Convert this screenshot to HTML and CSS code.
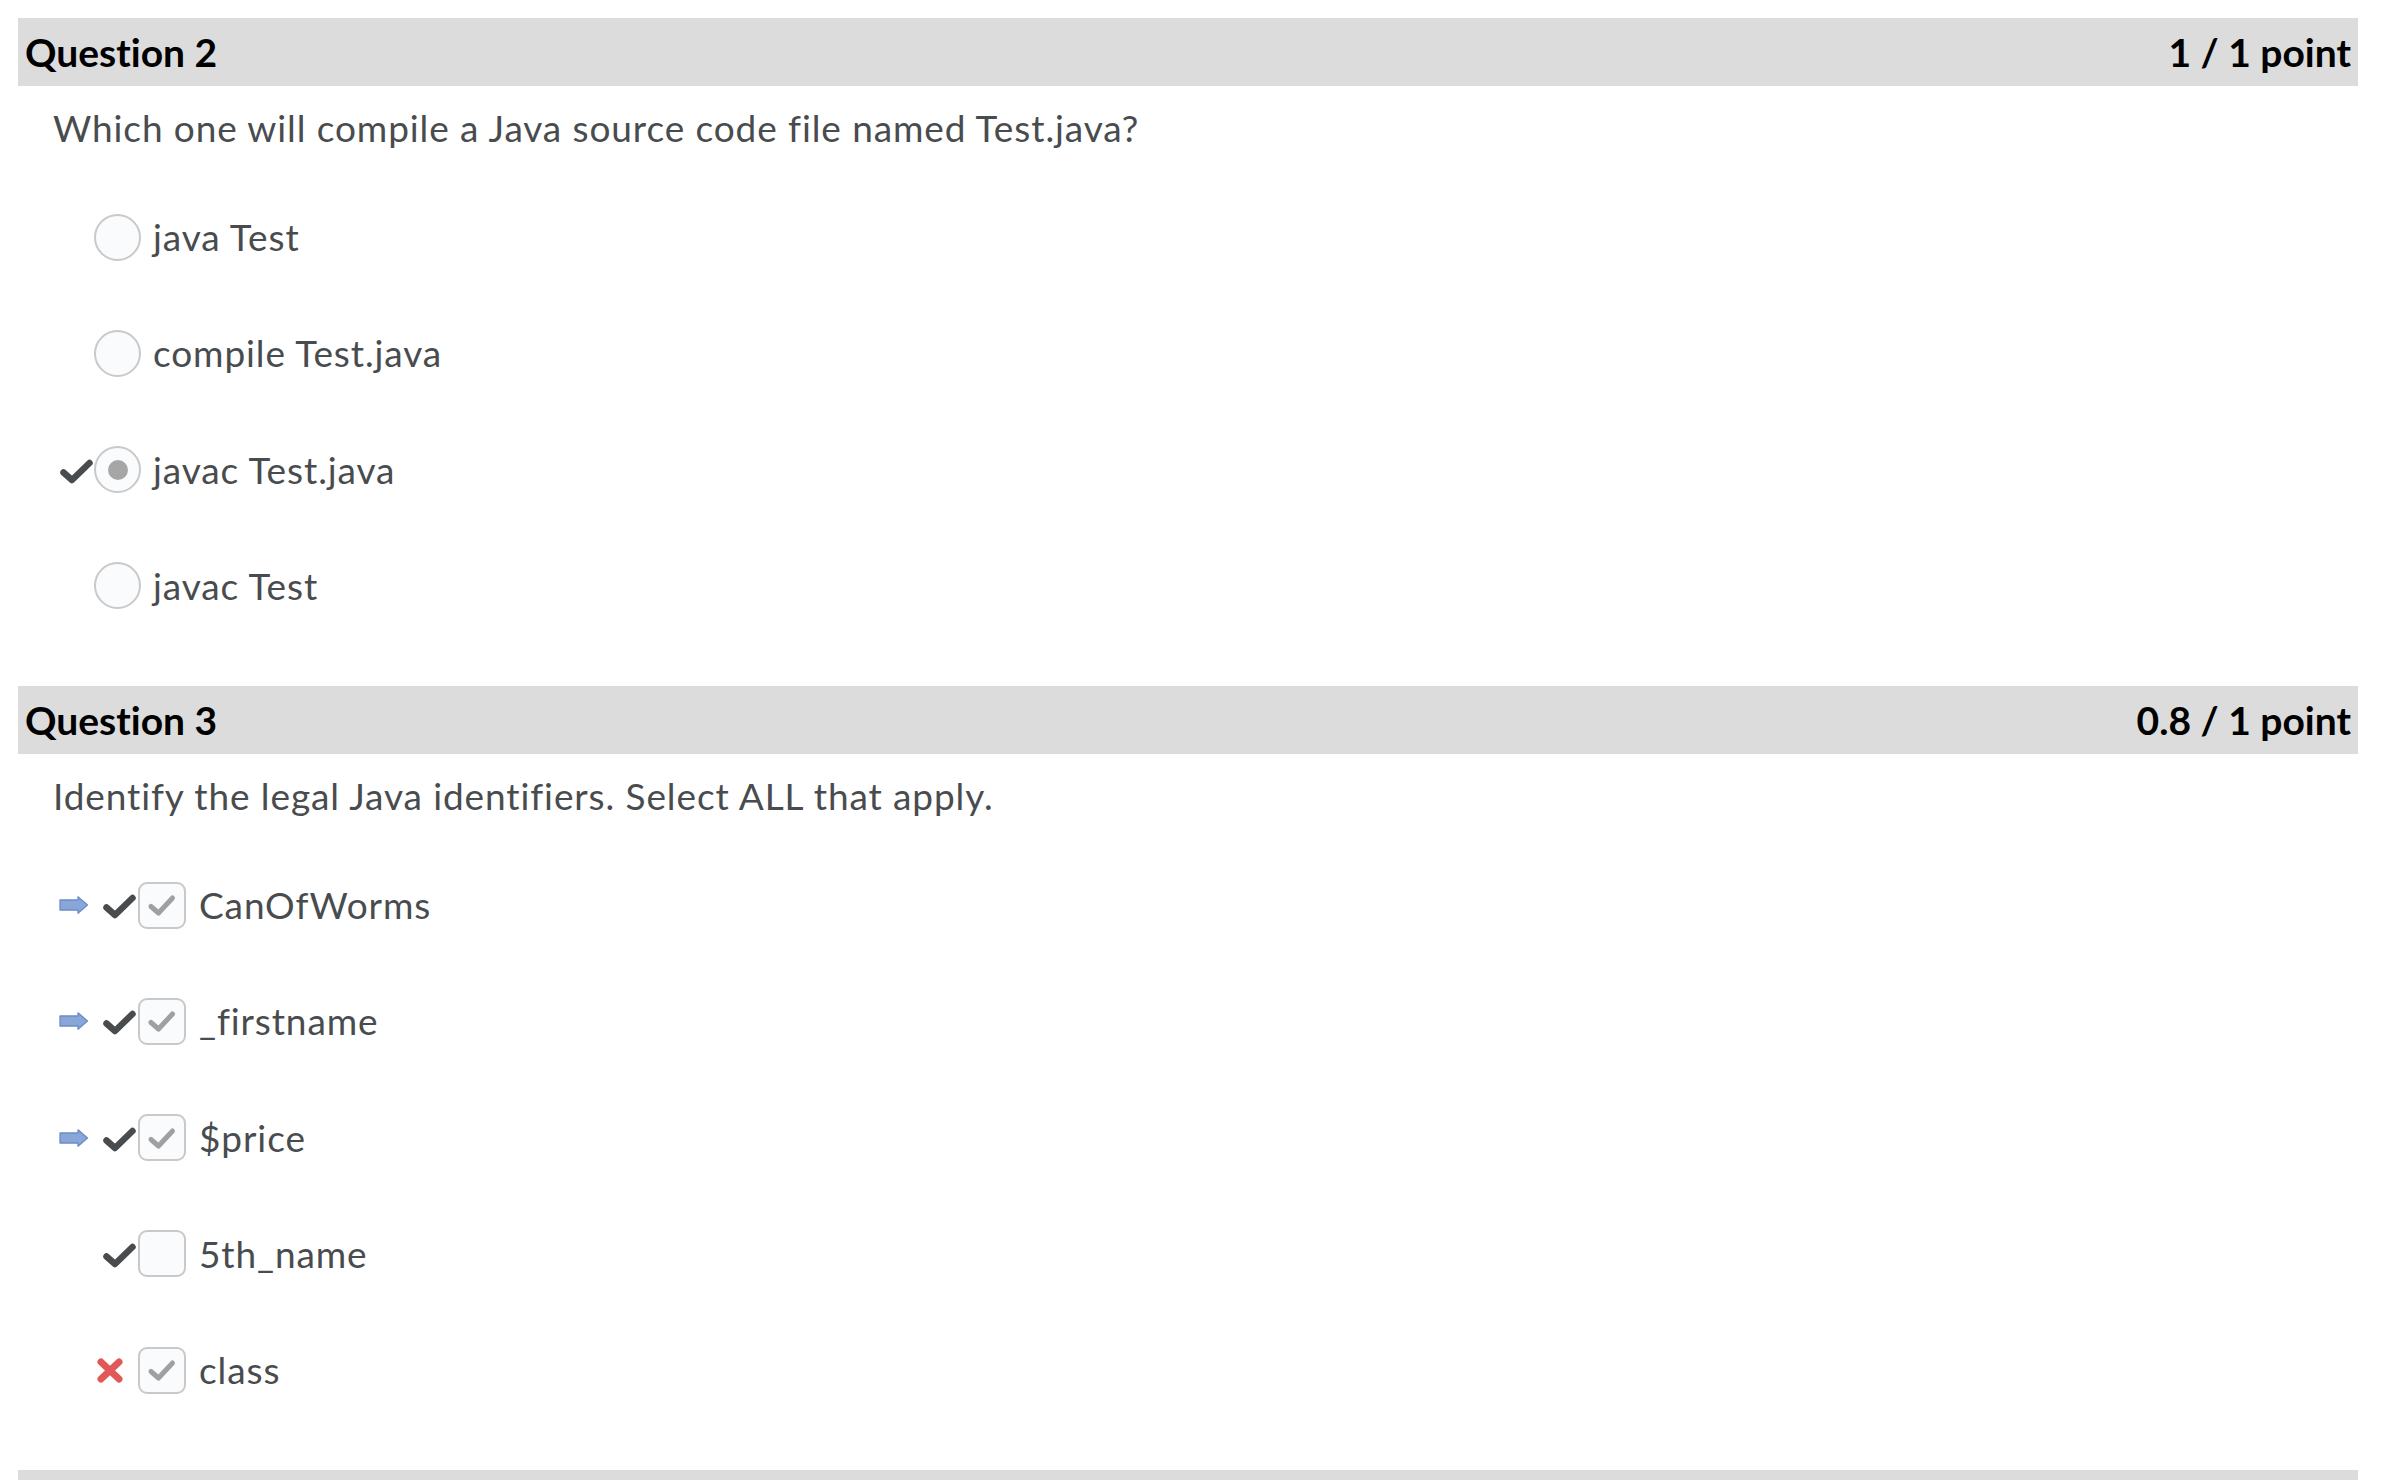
FILE: index.html
```html
<!DOCTYPE html>
<html lang="en">
<head>
<meta charset="utf-8">
<title>Quiz results</title>
<link rel="stylesheet" href="styles.css">
</head>
<body>
<div class="page">
  <section class="question">
    <div class="q-head"><span class="q-title">Question 2</span><span class="q-score">1 / 1 point</span></div>
    <p class="q-text">Which one will compile a Java source code file named Test.java?</p>
    <ul class="options options--radio">
      <li class="option"><span class="mark"></span><span class="radio"></span><span class="label">java Test</span></li>
      <li class="option"><span class="mark"></span><span class="radio"></span><span class="label">compile Test.java</span></li>
      <li class="option"><span class="mark"><svg class="ico-check" viewBox="0 0 33 25" width="33" height="25"><path d="M3.5 13.5 L12 21 L29.5 4" /></svg></span><span class="radio radio--on"></span><span class="label">javac Test.java</span></li>
      <li class="option"><span class="mark"></span><span class="radio"></span><span class="label">javac Test</span></li>
    </ul>
  </section>

  <section class="question">
    <div class="q-head"><span class="q-title">Question 3</span><span class="q-score">0.8 / 1 point</span></div>
    <p class="q-text">Identify the legal Java identifiers. Select ALL that apply.</p>
    <ul class="options options--check">
      <li class="option">
        <span class="hint"><svg class="ico-arrow" viewBox="0 0 30 18" width="30" height="18"><path d="M1 4 H19 V0.8 L28.5 9 L19 17.2 V14 H1 Z" /></svg></span>
        <span class="mark"><svg class="ico-check" viewBox="0 0 33 25" width="33" height="25"><path d="M3.5 13.5 L12 21 L29.5 4" /></svg></span>
        <span class="box"><svg class="ico-tick" viewBox="0 0 30 26" width="30" height="26"><path d="M4 14.5 L11.5 21 L25.5 6" /></svg></span>
        <span class="label">CanOfWorms</span>
      </li>
      <li class="option">
        <span class="hint"><svg class="ico-arrow" viewBox="0 0 30 18" width="30" height="18"><path d="M1 4 H19 V0.8 L28.5 9 L19 17.2 V14 H1 Z" /></svg></span>
        <span class="mark"><svg class="ico-check" viewBox="0 0 33 25" width="33" height="25"><path d="M3.5 13.5 L12 21 L29.5 4" /></svg></span>
        <span class="box"><svg class="ico-tick" viewBox="0 0 30 26" width="30" height="26"><path d="M4 14.5 L11.5 21 L25.5 6" /></svg></span>
        <span class="label">_firstname</span>
      </li>
      <li class="option">
        <span class="hint"><svg class="ico-arrow" viewBox="0 0 30 18" width="30" height="18"><path d="M1 4 H19 V0.8 L28.5 9 L19 17.2 V14 H1 Z" /></svg></span>
        <span class="mark"><svg class="ico-check" viewBox="0 0 33 25" width="33" height="25"><path d="M3.5 13.5 L12 21 L29.5 4" /></svg></span>
        <span class="box"><svg class="ico-tick" viewBox="0 0 30 26" width="30" height="26"><path d="M4 14.5 L11.5 21 L25.5 6" /></svg></span>
        <span class="label">$price</span>
      </li>
      <li class="option">
        <span class="hint"></span>
        <span class="mark"><svg class="ico-check" viewBox="0 0 33 25" width="33" height="25"><path d="M3.5 13.5 L12 21 L29.5 4" /></svg></span>
        <span class="box"></span>
        <span class="label">5th_name</span>
      </li>
      <li class="option">
        <span class="hint"></span>
        <span class="mark mark--wrong"><svg class="ico-cross" viewBox="0 0 26 25" width="26" height="25"><path d="M4 4 L22 21 M22 4 L4 21" /></svg></span>
        <span class="box"><svg class="ico-tick" viewBox="0 0 30 26" width="30" height="26"><path d="M4 14.5 L11.5 21 L25.5 6" /></svg></span>
        <span class="label">class</span>
      </li>
    </ul>
  </section>

  <section class="question">
    <div class="q-head"></div>
  </section>
</div>
</body>
</html>
```

FILE: styles.css
```css
html, body {
  margin: 0;
  padding: 0;
  overflow: hidden;
  background: #ffffff;
}

body {
  font-family: Lato, "Noto Sans", sans-serif;
  color: #494c4e;
  font-variant-ligatures: none;
}

.page {
  padding: 18px 32px 0 18px;
}

.q-head {
  display: flex;
  justify-content: space-between;
  align-items: center;
  height: 68px;
  box-sizing: border-box;
  padding: 0 7px 0 7px;
  background: #dcdcdc;
  color: #000000;
  font-weight: 700;
  font-size: 39px;
  line-height: 66px;
}

.q-text {
  margin: 15px 0 0 35px;
  font-size: 37px;
  letter-spacing: 0.9px;
  line-height: 54px;
}

.options {
  list-style: none;
  margin: 24px 0 42px;
  padding: 0;
}

.options--radio {
  padding-left: 42px;
}

.options--check {
  padding-left: 41px;
}

.option {
  display: flex;
  align-items: center;
  height: 116.25px;
  font-size: 37px;
  letter-spacing: 0.9px;
  line-height: 54px;
}

.label {
  white-space: nowrap;
}

/* radio list */
.options--radio .mark {
  width: 34px;
  display: flex;
  align-items: center;
}

.radio {
  width: 47px;
  height: 47px;
  flex: none;
  box-sizing: border-box;
  border: 2px solid #c9c9c9;
  border-radius: 50%;
  background: #f9fbfd;
  display: flex;
  align-items: center;
  justify-content: center;
  margin-right: 12px;
}

.radio--on::after {
  content: "";
  width: 20px;
  height: 20px;
  border-radius: 50%;
  background: #a6a6a6;
}

/* checkbox list */
.hint {
  width: 44px;
  flex: none;
  display: flex;
  align-items: center;
}

.options--check .mark {
  width: 35px;
  flex: none;
  display: flex;
  align-items: center;
}

.mark--wrong {
  margin-left: -6px;
  margin-right: 6px;
}

.box {
  width: 48px;
  height: 47px;
  flex: none;
  box-sizing: border-box;
  border: 2px solid #c9c9c9;
  border-radius: 9px;
  background: #f9fbfd;
  display: flex;
  align-items: center;
  justify-content: center;
  margin-right: 13px;
}

/* icons */
.ico-check {
  display: block;
  margin-top: 3px;
}

.ico-check path {
  fill: none;
  stroke: #494c4e;
  stroke-width: 6.5;
  stroke-linecap: round;
  stroke-linejoin: round;
}

.ico-tick {
  display: block;
}

.ico-tick path {
  fill: none;
  stroke: #a0a0a0;
  stroke-width: 5;
  stroke-linecap: round;
  stroke-linejoin: round;
}

.ico-arrow {
  display: block;
}

.ico-arrow path {
  fill: #89a6d9;
  stroke: #6b8cc4;
  stroke-width: 1.3;
  stroke-linejoin: round;
}

.ico-cross {
  display: block;
}

.ico-cross path {
  fill: none;
  stroke: #e05858;
  stroke-width: 7;
  stroke-linecap: round;
}
```
